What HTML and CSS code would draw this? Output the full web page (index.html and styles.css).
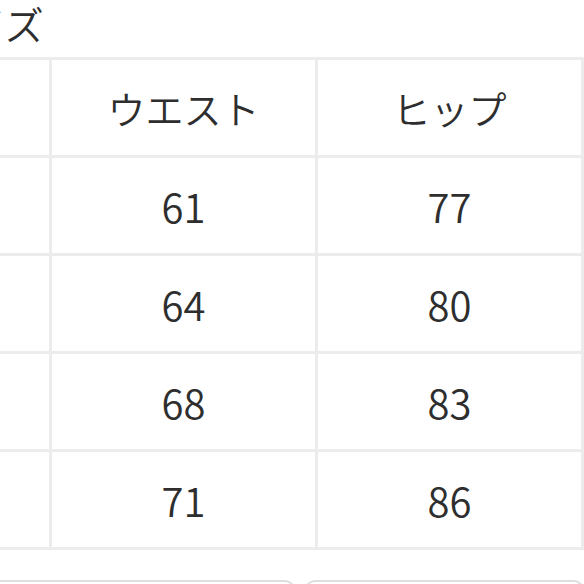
FILE: index.html
```html
<!DOCTYPE html>
<html lang="ja">
<head>
<meta charset="utf-8">
<title>サイズ</title>
<link rel="stylesheet" href="styles.css">
</head>
<body>
<div class="sheet">
  <div class="title">サイズ</div>
  <div class="size-table">
    <div class="cell head"></div>
    <div class="cell head">ウエスト</div>
    <div class="cell head">ヒップ</div>
    <div class="cell"></div>
    <div class="cell">61</div>
    <div class="cell">77</div>
    <div class="cell"></div>
    <div class="cell">64</div>
    <div class="cell">80</div>
    <div class="cell"></div>
    <div class="cell">68</div>
    <div class="cell">83</div>
    <div class="cell"></div>
    <div class="cell">71</div>
    <div class="cell">86</div>
  </div>
  <div class="actions">
    <div class="btn btn-left"></div>
    <div class="btn btn-right"></div>
  </div>
</div>
</body>
</html>
```

FILE: styles.css
```css
html, body {
  margin: 0;
  padding: 0;
  background: #ffffff;
  overflow: hidden;
}

body {
  width: 584px;
  height: 584px;
  font-family: "Noto Sans CJK JP", "Noto Sans", sans-serif;
  font-weight: 350;
  color: #2e2e2e;
}

.sheet {
  margin-left: -217px;
  width: 801px;
}

.title {
  height: 46px;
  line-height: 46px;
  font-size: 39px;
  padding-left: 145px;
  margin-bottom: 11px;
  white-space: nowrap;
}

.size-table {
  display: grid;
  grid-template-columns: repeat(3, 263px);
  grid-auto-rows: 95px;
  gap: 3px;
  padding: 3px;
  background: #ececec;
}

.cell {
  background: #ffffff;
  display: flex;
  align-items: center;
  justify-content: center;
  font-size: 40px;
  line-height: 1;
}

.cell.head {
  font-size: 38px;
}

.actions {
  display: flex;
  gap: 10px;
  margin-top: 30px;
}

.btn {
  box-sizing: border-box;
  height: 40px;
  border: 2px solid #dedede;
  border-radius: 10px;
  background: #ffffff;
}

.btn-left {
  width: 512px;
}

.btn-right {
  flex: 1;
}
```
